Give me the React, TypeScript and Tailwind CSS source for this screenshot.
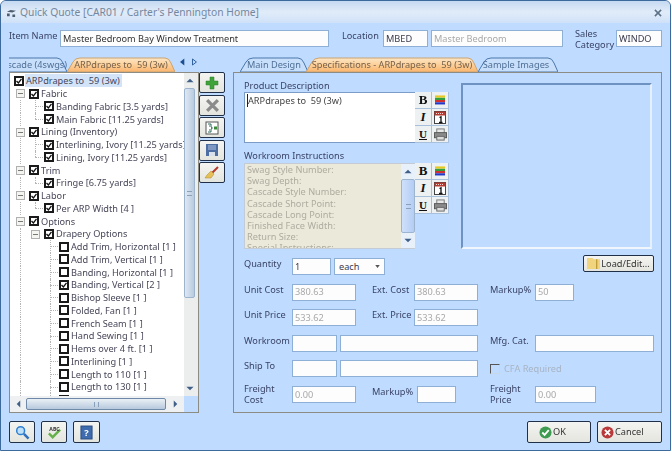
import React from "react";

const font = { fontFamily: '"Noto Sans", sans-serif' };

type TreeRow = { t: string; l: number; c?: boolean; exp?: boolean; guides?: number[]; sel?: boolean; end?: boolean };

const groups: TreeRow[] = [
  { t: "ARPdrapes to  59 (3w)", l: 0, c: true, sel: true },
  { t: "Fabric", l: 1, c: true, exp: true },
  { t: "Banding Fabric [3.5 yards]", l: 2, c: true, guides: [0] },
  { t: "Main Fabric [11.25 yards]", l: 2, c: true, guides: [0], end: true },
  { t: "Lining (Inventory)", l: 1, c: true, exp: true },
  { t: "Interlining, Ivory [11.25 yards]", l: 2, c: true, guides: [0] },
  { t: "Lining, Ivory [11.25 yards]", l: 2, c: true, guides: [0], end: true },
  { t: "Trim", l: 1, c: true, exp: true },
  { t: "Fringe [6.75 yards]", l: 2, c: true, guides: [0], end: true },
  { t: "Labor", l: 1, c: true, exp: true },
  { t: "Per ARP Width [4 ]", l: 2, c: true, guides: [0], end: true },
  { t: "Options", l: 1, c: true, exp: true },
  { t: "Drapery Options", l: 2, c: true, exp: true, guides: [0] },
  ...[
    ["Add Trim, Horizontal [1 ]", false],
    ["Add Trim, Vertical [1 ]", false],
    ["Banding, Horizontal [1 ]", false],
    ["Banding, Vertical [2 ]", true],
    ["Bishop Sleeve [1 ]", false],
    ["Folded, Fan [1 ]", false],
    ["French Seam [1 ]", false],
    ["Hand Sewing [1 ]", false],
    ["Hems over 4 ft. [1 ]", false],
    ["Interlining [1 ]", false],
    ["Length to 110 [1 ]", false],
    ["Length to 130 [1 ]", false],
    ["Length to 150 [1 ]", false],
  ].map(([t, c]) => ({ t: t as string, l: 3, c: c as boolean, guides: [0] })),
];

function CheckBox({ checked }: { checked?: boolean }) {
  return (
    <span className="w-[10px] h-[10px] shrink-0 border-2 border-[#1a1a1a] bg-white flex items-center justify-center">
      {checked && (
        <svg viewBox="0 0 6 6" className="w-[6px] h-[6px]">
          <path d="M0.5 3 L2.4 5 L5.5 0.8" fill="none" stroke="#111" strokeWidth="1.3" />
        </svg>
      )}
    </span>
  );
}

function TreeCell({ row, i }: { row: TreeRow; i: number }) {
  const last = i === row.l - 1;
  const guide = row.guides?.includes(i);
  return (
    <span className="relative w-[15px] h-full shrink-0">
      {guide && <span className="absolute left-[6px] top-0 bottom-0 border-l border-dotted border-[#b5b5b5]" />}
      {last && !row.exp && (
        <>
          <span className={`absolute left-[6px] top-0 border-l border-dotted border-[#b5b5b5] ${row.end ? "h-[6px]" : "h-full"}`} />
          <span className="absolute left-[6px] top-[6px] w-[8px] border-t border-dotted border-[#b5b5b5]" />
        </>
      )}
      {last && row.exp && (
        <span className="absolute left-[2px] top-[2px] w-[9px] h-[9px] border border-[#b0b0b0] bg-[#f4f4f0] flex items-center justify-center">
          <span className="w-[5px] border-t border-[#777]" />
        </span>
      )}
    </span>
  );
}

function Tree() {
  return (
    <div className="pl-[4px] pt-[1.6px] h-[323px] overflow-hidden bg-white">
      {groups.map((row) => (
        <div key={row.t} className="flex items-center h-[12.75px] whitespace-pre">
          {Array.from({ length: row.l }).map((_, i) => (
            <TreeCell key={i} row={row} i={i} />
          ))}
          <CheckBox checked={row.c} />
          <span className={`ml-[1px] pl-[1px] pr-[2px] text-[#47475a] leading-[13px] ${row.sel ? "bg-[#d3e4f8]" : ""}`}>{row.t}</span>
        </div>
      ))}
    </div>
  );
}

function VScroll({ pale, thumb }: { pale?: boolean; thumb?: string }) {
  return (
    <div className={`w-[14px] shrink-0 flex flex-col items-center ${pale ? "bg-[#e8f0fa]" : "bg-[#eceeee] pr-[3px]"}`}>
      <svg viewBox="0 0 9 5" className="w-[8px] h-[5px] my-[5px] shrink-0">
        <path d="M0.5 4.5 L4.5 0.5 L8.5 4.5Z" fill="#3f5f88" />
      </svg>
      <div className="flex-1 w-full min-h-0">
        <div className={`w-full h-full rounded-[2px] border border-[#9db4cf] bg-gradient-to-r ${pale ? "from-[#cfe0fa] to-[#b4cdf4]" : "from-[#dfe8f3] to-[#b9cbe0]"} flex items-center justify-center ${thumb ?? ""}`}>
          <span className="w-[5px] h-[5px] border-y border-[#8aa1bb]" />
        </div>
      </div>
      <svg viewBox="0 0 9 5" className="w-[8px] h-[5px] my-[5px] shrink-0">
        <path d="M0.5 0.5 L4.5 4.5 L8.5 0.5Z" fill="#3f5f88" />
      </svg>
    </div>
  );
}

function TabShape({ active, w }: { active?: boolean; w: number }) {
  const d = `M0 15 L6 5 Q8 1 13 1 L${w - 10} 1 Q${w - 6} 1 ${w - 4} 6 L${w} 15 Z`;
  return (
    <svg className="absolute inset-0 w-full h-full" viewBox={`0 0 ${w} 15`} preserveAspectRatio="none">
      <defs>
        <linearGradient id="tabOn" x1="0" y1="0" x2="0" y2="1">
          <stop offset="0" stopColor="#fde7c4" />
          <stop offset="1" stopColor="#fbb56c" />
        </linearGradient>
      </defs>
      <path d={d} fill={active ? "url(#tabOn)" : "#c8dffb"} stroke={active ? "#c9a272" : "#4a77ab"} strokeWidth="1" />
    </svg>
  );
}

function Tab({ label, active, w, className = "", textClass = "" }: { label: string; active?: boolean; w: number; className?: string; textClass?: string }) {
  return (
    <div className={`relative h-[15px] shrink-0 ${className}`} style={{ width: w }}>
      <TabShape active={active} w={w} />
      <span className={`relative flex h-full items-center justify-center whitespace-pre leading-none ${active ? "text-[#76614a]" : "text-[#4f6f96]"} ${textClass}`}>
        {label}
      </span>
    </div>
  );
}

function Field({ value, className = "", muted }: { value?: string; className?: string; muted?: boolean }) {
  return (
    <div className={`h-[17px] shrink-0 bg-[#fdfdfd] border border-[#8fb0d6] px-[2px] flex items-center whitespace-nowrap overflow-hidden ${muted ? "text-[#a9a9a9]" : "text-[#3b3b4f]"} ${className}`}>
      {value}
    </div>
  );
}

function Label({ children, className = "" }: { children: React.ReactNode; className?: string }) {
  return <div className={`text-[#3a4466] leading-[11.5px] ${className}`}>{children}</div>;
}

function ToolButton({ children, className = "" }: { children: React.ReactNode; className?: string }) {
  return (
    <div className={`flex items-center justify-center border border-[#1f3048] rounded-[2px] bg-gradient-to-b from-[#f4f5f2] to-[#e4e5de] ${className}`}>
      {children}
    </div>
  );
}

function Bold() {
  return <span className="font-bold text-[13px] text-[#111]" style={{ fontFamily: '"Liberation Serif", serif' }}>B</span>;
}
function Italic() {
  return <span className="font-bold italic text-[13px] text-[#111]" style={{ fontFamily: '"Liberation Serif", serif' }}>I</span>;
}
function Under() {
  return <span className="font-bold underline text-[11px] text-[#111]" style={{ fontFamily: '"Liberation Serif", serif' }}>U</span>;
}
function Colors() {
  return (
    <svg viewBox="0 0 11 10" className="w-[10px] h-[10px]">
      <rect y="0" width="11" height="2.4" fill="#e6c81e" />
      <rect y="2.6" width="11" height="2.4" fill="#2f9e3c" />
      <rect y="5" width="11" height="2.4" fill="#d33030" />
      <rect y="7.5" width="11" height="2.4" fill="#2438c8" />
    </svg>
  );
}
function Calendar() {
  return (
    <svg viewBox="0 0 12 13" className="w-[12px] h-[13px]">
      <rect x="0.5" y="0.5" width="11" height="12" fill="#fff" stroke="#444" />
      <rect x="0.5" y="0.5" width="11" height="4" fill="#b53a30" />
      <path d="M2 2.5 H10" stroke="#f3d6d0" strokeDasharray="1 1" />
      <path d="M5.5 6.5 L7 5.8 V11.5 M5 11.5 H8.5" stroke="#111" strokeWidth="1.3" fill="none" />
    </svg>
  );
}
function Printer() {
  return (
    <svg viewBox="0 0 14 13" className="w-[13px] h-[13px]">
      <rect x="3" y="0.5" width="8" height="5" fill="#e8e8e8" stroke="#777" />
      <rect x="0.5" y="4.5" width="13" height="5.5" fill="#8a8a8a" stroke="#555" />
      <rect x="3" y="8.5" width="8" height="4" fill="#dcdcdc" stroke="#666" />
    </svg>
  );
}

function FormatButtons() {
  const cells = [<Bold />, <Colors />, <Italic />, <Calendar />, <Under />, <Printer />];
  return (
    <div className="grid grid-cols-[16px_16px] grid-rows-[16px_16px_16px] gap-[1px] bg-[#a9c0dc] self-start border-r border-b border-[#a9c0dc]">
      {cells.map((c, i) => (
        <div key={i} className="bg-[#edf1f2] flex items-center justify-center">
          {c}
        </div>
      ))}
    </div>
  );
}

export default function App() {
  return (
    <div className="w-[671px] h-[451px] overflow-hidden bg-[#bfdbff] border border-[#3d6a9c] rounded-t-[6px] text-[9.2px] flex flex-col blur-[0.3px]" style={font}>
      {/* title bar */}
      <div className="h-[22px] shrink-0 flex items-center pt-[2px] pl-[5px] pr-[8px] bg-gradient-to-b from-[#c5d9f1] via-[#e1ecf9] to-[#cfe1f8]">
        <svg viewBox="0 0 12 10" className="w-[11px] h-[9px] mr-[3px]">
          <path d="M1 3 L5 1 L11 2 L7 4Z M1 5 H4 V8 H1Z M7 6 H10 V9 H7Z" fill="#4d5e70" />
        </svg>
        <span className="text-[10.3px] text-[#74879e] whitespace-nowrap">Quick Quote [CAR01 / Carter's Pennington Home]</span>
        <svg viewBox="0 0 9 9" className="w-[8px] h-[8px] ml-auto">
          <path d="M1 1 L8 8 M8 1 L1 8" stroke="#5d7186" strokeWidth="1.7" />
        </svg>
      </div>

      {/* item header */}
      <div className="flex items-start h-[19px] mt-[6px] pl-[8px] shrink-0">
        <Label className="w-[51px] mt-[1px] whitespace-nowrap">Item Name</Label>
        <Field value="Master Bedroom Bay Window Treatment" className="w-[269px] !text-[#333] mt-[1px]" />
        <Label className="ml-[13px] w-[41px] mt-[1px]">Location</Label>
        <Field value="MBED" className="w-[45px] mt-[1px]" />
        <Field value="Master Bedroom" muted className="ml-[3px] w-[132px] mt-[1px]" />
        <Label className="ml-[12px] w-[41px] self-center mt-[1px]">Sales Category</Label>
        <Field value="WINDO" className="w-[46px] mt-[1px]" />
      </div>

      {/* main area */}
      <div className="flex flex-1 pl-[8px] mt-[9px] min-h-0">
        {/* tree column */}
        <div className="w-[190px] shrink-0 flex flex-col">
          <div className="flex items-end h-[15px] relative overflow-hidden shrink-0">
            <div className="w-[58px] h-[15px] shrink-0 overflow-hidden flex justify-end">
              <Tab label="Swag Cascade (4swgs)" w={96} />
            </div>
            <Tab label="ARPdrapes to  59 (3w)" active w={108} />
            <svg viewBox="0 0 22 8" className="w-[20px] h-[8px] ml-[5px] mb-[6px]">
              <path d="M5 0 L0 4 L5 8Z" fill="#1c4f8f" />
              <path d="M14.5 0.5 L19 4 L14.5 7.5Z" fill="none" stroke="#1c4f8f" />
            </svg>
          </div>
          <div className="h-[341px] border border-[#8c8c84] flex flex-col bg-white shrink-0">
            <div className="flex flex-1 min-h-0">
              <div className="flex-1 min-w-0 overflow-hidden">
                <Tree />
              </div>
              <VScroll thumb="!h-[210px]" />
            </div>
            <div className="h-[16px] flex items-center bg-[#eef0f1] shrink-0">
              <svg viewBox="0 0 5 9" className="w-[5px] h-[8px] mx-[5.5px]">
                <path d="M4.5 0.5 L0.5 4.5 L4.5 8.5Z" fill="#3f5f88" />
              </svg>
              <div className="flex-1 h-[12px] rounded-[2px] border border-[#6f8aa8] bg-gradient-to-b from-[#eaf0f6] to-[#b7c9dd] flex items-center justify-center">
                <span className="w-[5px] h-[5px] border-x border-[#8aa1bb]" />
              </div>
              <svg viewBox="0 0 5 9" className="w-[5px] h-[8px] mx-[6.5px]">
                <path d="M0.5 0.5 L4.5 4.5 L0.5 8.5Z" fill="#3f5f88" />
              </svg>
              <div className="w-[14px] h-full bg-[#bfdbff]" />
            </div>
          </div>
        </div>

        {/* tool buttons */}
        <div className="w-[26px] mt-[15px] flex flex-col gap-[1.5px] shrink-0">
          <ToolButton className="h-[21px]">
            <svg viewBox="0 0 14 14" className="w-[14px] h-[14px]">
              <path d="M5 1 H9 V5 H13 V9 H9 V13 H5 V9 H1 V5 H5Z" fill="#3fa33a" stroke="#2b7d2b" strokeWidth="0.5" />
            </svg>
          </ToolButton>
          <ToolButton className="h-[21px]">
            <svg viewBox="0 0 14 14" className="w-[15px] h-[15px]">
              <path d="M2 2 L12 12 M12 2 L2 12" stroke="#8b8b8b" strokeWidth="3" />
            </svg>
          </ToolButton>
          <ToolButton className="h-[21px]">
            <svg viewBox="0 0 14 14" className="w-[14px] h-[14px]">
              <rect x="1" y="1" width="12" height="12" fill="#fff" stroke="#555" />
              <rect x="9" y="5.5" width="3" height="3" fill="#3a8a3a" />
              <path d="M3 3 H6 V6 L7.5 7 L6 8 V11 H3 M4 5 H5 M4 9 H5" fill="none" stroke="#2d6b5a" />
            </svg>
          </ToolButton>
          <ToolButton className="h-[21px]">
            <svg viewBox="0 0 14 14" className="w-[14px] h-[14px]">
              <path d="M1 1 H13 V13 H1Z" fill="#4d6ea3" />
              <rect x="3" y="2" width="8" height="5" fill="#7e98c2" />
              <rect x="4" y="9" width="6" height="4" fill="#d8e0ec" />
            </svg>
          </ToolButton>
          <ToolButton className="h-[21px]">
            <svg viewBox="0 0 16 16" className="w-[16px] h-[16px]">
              <path d="M8 8 L14 2" stroke="#b5382c" strokeWidth="2" />
              <path d="M7 6 L10 9 L7 13 L1 13 L3 10Z" fill="#e6bf58" stroke="#a98a30" strokeWidth="0.5" />
            </svg>
          </ToolButton>
        </div>

        {/* detail column */}
        <div className="w-[429px] ml-[8px] shrink-0 flex flex-col">
          <div className="flex h-[15px] pl-[7px] shrink-0">
            <Tab label="Main Design" w={68} />
            <Tab label="Specifications - ARPdrapes to  59 (3w)" active w={172} className="-ml-[2px]" />
            <Tab label="Sample Images" w={80} textClass="pr-[4px]" />
          </div>
          <div className="h-[341px] border border-[#8c8c84] flex flex-col pl-[10px] pr-[6px] shrink-0">
            <div className="flex h-[177px] pt-[6px] shrink-0">
              <div className="w-[205px] shrink-0">
                <Label className="h-[10px] leading-[10px] mt-[1px]">Product Description</Label>
                <div className="flex mt-[2px]">
                  <div className="w-[172px] h-[51px] bg-white border border-[#7a9cc6] border-r-0 px-[2px] py-[1px] text-[#444] leading-[13px] whitespace-pre">
                    <span className="border-l border-[#222]">ARPdrapes to  59 (3w)</span>
                  </div>
                  <FormatButtons />
                </div>
                <Label className="mt-[7px] h-[10px] leading-[10px]">Workroom Instructions</Label>
                <div className="flex mt-[3px]">
                  <div className="w-[172px] h-[86px] flex bg-[#ebe9d9] border border-[#c5cbd4] border-r-0 overflow-hidden">
                    <div className="flex-1 px-[2px] text-[#aeaca0] leading-[11.2px] whitespace-nowrap overflow-hidden">
                      <div>Swag Style Number:</div>
                      <div>Swag Depth:</div>
                      <div>Cascade Style Number:</div>
                      <div>Cascade Short Point:</div>
                      <div>Cascade Long Point:</div>
                      <div>Finished Face Width:</div>
                      <div>Return Size:</div>
                      <div>Special Instructions:</div>
                    </div>
                    <VScroll pale />
                  </div>
                  <FormatButtons />
                </div>
              </div>
              <div className="ml-[12px] w-[191px] h-[166px] mt-[4px] border-2 border-t-[#6e92c1] border-l-[#6e92c1] border-r-[#e6f0fb] border-b-[#f1f6fc]" />
            </div>

            <div className="grid grid-cols-[48px_80px_42px_76px_45px_119px] grid-rows-[17px_17px_17px_17px_17px_17px] gap-y-[8.6px] mt-[8px]">
              <Label>Quantity</Label>
              <div className="flex col-span-4">
                <Field value="1" className="w-[39px]" />
                <div className="ml-[3px] w-[51px] h-[17px] bg-[#fdfdfd] border border-[#8fb0d6] px-[4px] flex items-center justify-between text-[#3b3b4f]">
                  each
                  <svg viewBox="0 0 6 4" className="w-[5px] h-[3px]">
                    <path d="M0 0 H6 L3 4Z" fill="#555" />
                  </svg>
                </div>
              </div>
              <div className="flex justify-end -mt-[3px]">
                <ToolButton className="w-[71px] h-[17px] gap-[1px]">
                  <svg viewBox="0 0 12 12" className="w-[13px] h-[13px]">
                    <path d="M0 1 H5 L6 2 H12 V11 H0Z" fill="#f0d57e" />
                    <path d="M9 2 V11" stroke="#b58e2a" />
                  </svg>
                  <span className="text-[#333]">Load/Edit...</span>
                </ToolButton>
              </div>

              <Label>Unit Cost</Label>
              <Field value="380.63" muted className="w-[64px]" />
              <Label>Ext. Cost</Label>
              <Field value="380.63" muted className="w-[64px]" />
              <Label>Markup%</Label>
              <Field value="50" muted className="w-[39px]" />

              <Label>Unit Price</Label>
              <Field value="533.62" muted className="w-[64px]" />
              <Label>Ext. Price</Label>
              <Field value="533.62" muted className="w-[64px]" />
              <div className="col-span-2" />

              <Label>Workroom</Label>
              <div className="flex col-span-3 gap-[3px]">
                <Field className="w-[45px]" />
                <Field className="w-[138px]" />
              </div>
              <Label>Mfg. Cat.</Label>
              <Field className="w-[119px]" />

              <Label>Ship To</Label>
              <div className="flex col-span-3 gap-[3px]">
                <Field className="w-[45px]" />
                <Field className="w-[138px]" />
              </div>
              <div className="col-span-2 flex items-center">
                <span className="w-[10px] h-[10px] border border-l-[#555] border-t-[#555] border-r-[#c9d6e6] border-b-[#c9d6e6]" />
                <span className="ml-[4px] text-[#a8b4c4]">CFA Required</span>
              </div>

              <Label className="self-center w-[30px]">Freight Cost</Label>
              <Field value="0.00" muted className="w-[64px]" />
              <Label>Markup%</Label>
              <Field className="w-[39px] ml-[3px]" />
              <Label className="self-center w-[30px]">Freight Price</Label>
              <Field value="0.00" muted className="w-[61px]" />
            </div>
          </div>
        </div>
      </div>

      {/* footer */}
      <div className="h-[36px] shrink-0 flex items-start pl-[8px] pr-[8px] pt-[7px]">
        <ToolButton className="w-[26px] h-[22px] mr-[6px]">
          <svg viewBox="0 0 16 16" className="w-[15px] h-[15px]">
            <circle cx="6" cy="6" r="4.2" fill="#bfe0fa" stroke="#2f7fd0" strokeWidth="1.6" />
            <path d="M9.5 9.5 L14.5 14.5" stroke="#2d6fbd" strokeWidth="2.6" />
          </svg>
        </ToolButton>
        <ToolButton className="w-[26px] h-[22px] mr-[6px]">
          <svg viewBox="0 0 16 16" className="w-[15px] h-[15px]">
            <path d="M2 9 L6 13 L14 5" fill="none" stroke="#67b14a" strokeWidth="2.6" />
            <text x="2.5" y="6" fontSize="5.5" fontWeight="700" fill="#333">ABC</text>
          </svg>
        </ToolButton>
        <ToolButton className="w-[27px] h-[22px]">
          <svg viewBox="0 0 14 16" className="w-[13px] h-[15px]">
            <rect x="1" y="1" width="12" height="14" fill="#3e6cae" stroke="#274a80" />
            <text x="7" y="12" fontSize="10" fontWeight="700" fill="#fff" textAnchor="middle">?</text>
          </svg>
        </ToolButton>
        <ToolButton className="w-[64px] h-[22px] ml-auto gap-[1px] !justify-start pl-[11px]">
          <svg viewBox="0 0 14 14" className="w-[13px] h-[13px]">
            <circle cx="7" cy="7" r="6.5" fill="#3f9b50" />
            <path d="M3.5 7 L6 9.5 L10.5 4.5" fill="none" stroke="#fff" strokeWidth="2" />
          </svg>
          <span className="text-[#333]">OK</span>
        </ToolButton>
        <ToolButton className="w-[65px] h-[22px] ml-[6px] gap-[1px] !justify-start pl-[3px]">
          <svg viewBox="0 0 14 14" className="w-[13px] h-[13px]">
            <circle cx="7" cy="7" r="6.5" fill="#b93a3a" />
            <path d="M4.2 4.2 L9.8 9.8 M9.8 4.2 L4.2 9.8" stroke="#fff" strokeWidth="2" />
          </svg>
          <span className="text-[#333]">Cancel</span>
        </ToolButton>
      </div>
    </div>
  );
}
